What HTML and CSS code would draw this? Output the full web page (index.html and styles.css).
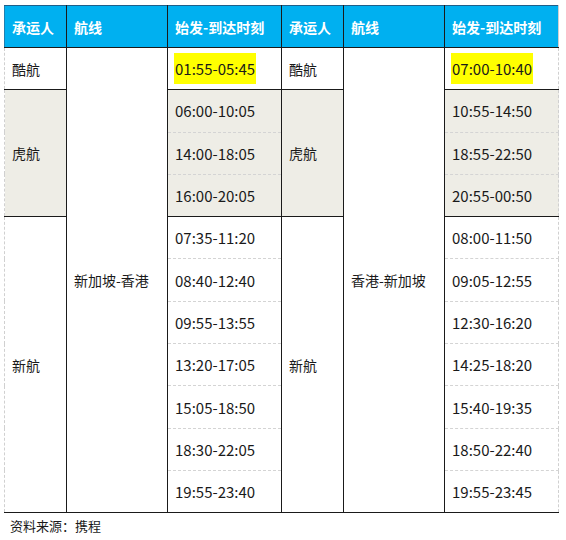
FILE: index.html
```html
<!DOCTYPE html>
<html lang="zh">
<head>
<meta charset="utf-8">
<link rel="stylesheet" href="styles.css">
</head>
<body>
<table class="sched">
<colgroup>
<col class="c-car"><col class="c-route"><col class="c-time">
<col class="c-car"><col class="c-route"><col class="c-time">
</colgroup>
<thead>
<tr>
<th class="first">承运人</th><th>航线</th><th>始发-到达时刻</th>
<th>承运人</th><th>航线</th><th class="last">始发-到达时刻</th>
</tr>
</thead>
<tbody>
<tr class="grp-end">
<td class="first">酷航</td>
<td class="route" rowspan="11">新加坡-香港</td>
<td class="time"><span class="hl">01:55-05:45</span></td>
<td>酷航</td>
<td class="route" rowspan="11">香港-新加坡</td>
<td class="time last"><span class="hl">07:00-10:40</span></td>
</tr>
<tr class="gray">
<td class="first" rowspan="3">虎航</td>
<td class="time">06:00-10:05</td>
<td rowspan="3">虎航</td>
<td class="time last">10:55-14:50</td>
</tr>
<tr class="gray">
<td class="time">14:00-18:05</td>
<td class="time last">18:55-22:50</td>
</tr>
<tr class="gray grp-end">
<td class="time">16:00-20:05</td>
<td class="time last">20:55-00:50</td>
</tr>
<tr>
<td class="first" rowspan="7">新航</td>
<td class="time">07:35-11:20</td>
<td rowspan="7">新航</td>
<td class="time last">08:00-11:50</td>
</tr>
<tr><td class="time">08:40-12:40</td><td class="time last">09:05-12:55</td></tr>
<tr><td class="time">09:55-13:55</td><td class="time last">12:30-16:20</td></tr>
<tr><td class="time">13:20-17:05</td><td class="time last">14:25-18:20</td></tr>
<tr><td class="time">15:05-18:50</td><td class="time last">15:40-19:35</td></tr>
<tr><td class="time">18:30-22:05</td><td class="time last">18:50-22:40</td></tr>
<tr class="grp-end"><td class="time">19:55-23:40</td><td class="time last">19:55-23:45</td></tr>
</tbody>
</table>
<p class="source">资料来源：携程</p>
</body>
</html>
```
FILE: styles.css
```css
html, body {
  margin: 0;
  background: #ffffff;
}
body {
  padding: 5px 4px 0 4px;
  font-family: "Noto Sans CJK SC", "Noto Sans", sans-serif;
  color: #1a1a1a;
}
.sched {
  border-collapse: collapse;
  table-layout: fixed;
  width: 554px;
  font-size: 14px;
}
.c-car { width: 62px; }
.c-route { width: 101px; }
.c-time { width: 114px; }
.sched th {
  background: #00b0f0;
  color: #ffffff;
  font-weight: bold;
  text-align: left;
  height: 41px;
  padding: 0 0 0 7px;
  border-top: 1px solid #1f5f8a;
  border-bottom: 1px solid #1a1a1a;
  border-left: 1px solid #1a1a1a;
  border-right: 1px solid #1a1a1a;
}
.sched th.first { border-left: 1px solid #1f7fb0; }
.sched th.last { border-right: 1px solid #d0d0d0; }
.sched td {
  height: 41.3px;
  padding: 0 0 0 7px;
  border-left: 1px solid #1a1a1a;
  border-right: 1px solid #1a1a1a;
  border-top: 1px dashed #d4d4d4;
  border-bottom: 1px dashed #d4d4d4;
  vertical-align: middle;
  white-space: nowrap;
}
.sched td.first { border-left: 1px dashed #d0d0d0; }
.sched td.last { border-right: 1px dashed #d0d0d0; }
.sched td.time { font-size: 15px; }
.sched tr.grp-end td { border-bottom: 1px solid #1a1a1a; }
.sched td[rowspan] { border-bottom: 1px solid #1a1a1a; }
.sched td.route { background: #ffffff; border-bottom: 1px solid #1a1a1a; }
.sched tr.gray td { background: #eeede6; }
.sched tr.gray td.route { background: #ffffff; }
.hl {
  background: #ffff00;
  display: inline-block;
  line-height: 31px;
  margin-left: -1px;
  padding: 0 1px;
}
.source {
  margin: 3px 0 0 6px;
  font-size: 13px;
  color: #1a1a1a;
}
```
